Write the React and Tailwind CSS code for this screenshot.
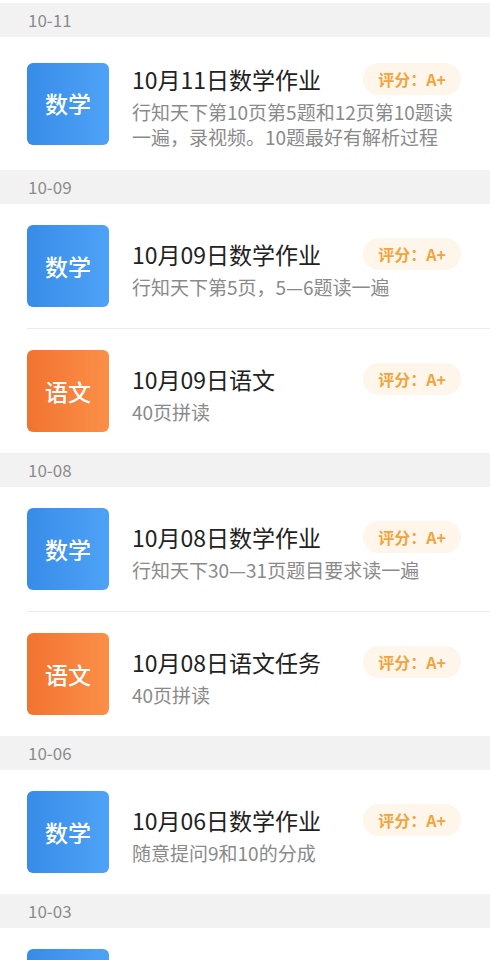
import React from 'react';

const groups = [
  {
    date: '10-11',
    items: [
      { subject: '数学', title: '10月11日数学作业', desc: '行知天下第10页第5题和12页第10题读一遍，录视频。10题最好有解析过程' },
    ],
  },
  {
    date: '10-09',
    items: [
      { subject: '数学', title: '10月09日数学作业', desc: '行知天下第5页，5—6题读一遍' },
      { subject: '语文', title: '10月09日语文', desc: '40页拼读' },
    ],
  },
  {
    date: '10-08',
    items: [
      { subject: '数学', title: '10月08日数学作业', desc: '行知天下30—31页题目要求读一遍' },
      { subject: '语文', title: '10月08日语文任务', desc: '40页拼读' },
    ],
  },
  {
    date: '10-06',
    items: [
      { subject: '数学', title: '10月06日数学作业', desc: '随意提问9和10的分成' },
    ],
  },
  {
    date: '10-03',
    items: [
      { subject: '数学', title: '10月03日数学作业', desc: '行知天下第3页读一遍' },
    ],
  },
];

function SubjectIcon({ subject }) {
  const isMath = subject === '数学';
  return (
    <div
      className={`w-[82px] h-[82px] shrink-0 rounded-[6px] flex items-center justify-center text-white text-[23px] font-medium ${
        isMath ? 'bg-gradient-to-r from-[#378ce8] to-[#4ea2f6]' : 'bg-gradient-to-r from-[#f1732f] to-[#fb8f48]'
      }`}
    >
      {subject}
    </div>
  );
}

function HomeworkRow({ item }) {
  return (
    <div className="flex items-center py-[21px] pl-[27px] pr-[29px] bg-white">
      <SubjectIcon subject={item.subject} />
      <div className="flex-1 min-w-0 ml-[23px] pt-[5px]">
        <div className="flex items-center justify-between h-[32px]">
          <span className="text-[23px] leading-[32px] text-[#222]">{item.title}</span>
          <span className="h-[32px] px-[15px] rounded-full bg-[#fef6ea] text-[#f2a43c] text-[16px] font-bold flex items-center">
            评分：A+
          </span>
        </div>
        <p className="mt-[4px] text-[19px] leading-[25px] text-[#8a8a8a]">{item.desc}</p>
      </div>
    </div>
  );
}

export default function App() {
  return (
    <div className="w-[490px] h-[960px] overflow-hidden bg-white pt-[3px] font-['Noto_Sans_CJK_SC','Noto_Sans',sans-serif]">
      {groups.map((g) => (
        <div key={g.date}>
          <div className="h-[34px] flex items-center pl-[28px] bg-[#f2f2f2] text-[17px] text-[#8c8c8c]">
            {g.date}
          </div>
          {g.items.map((item, i) => (
            <div key={item.title}>
              {i > 0 && <div className="ml-[27px] h-px bg-[#ebebeb]" />}
              <HomeworkRow item={item} />
            </div>
          ))}
        </div>
      ))}
    </div>
  );
}
